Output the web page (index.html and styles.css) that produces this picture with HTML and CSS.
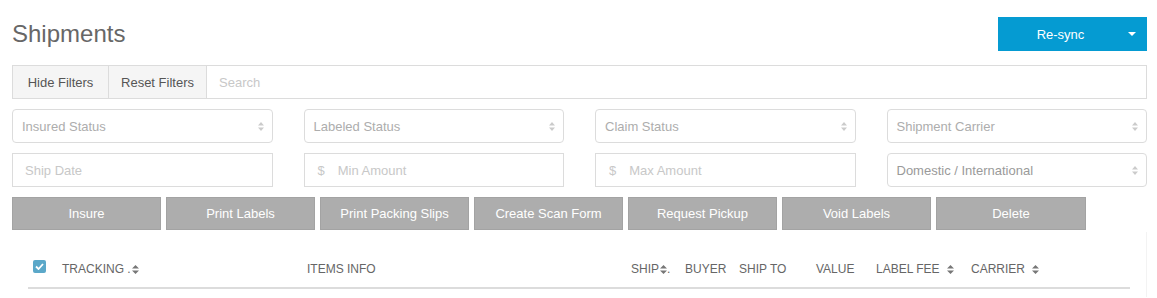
FILE: index.html
```html
<!DOCTYPE html>
<html>
<head>
<meta charset="utf-8">
<link rel="stylesheet" href="styles.css">
</head>
<body>
<div class="page">
  <div class="top">
    <h1 class="title">Shipments</h1>
    <div class="resync">
      <span class="resync-main">Re-sync</span>
      <span class="resync-caret"><svg width="8" height="4" viewBox="0 0 8 4"><path d="M0 0H8L4 4Z" fill="#fff"/></svg></span>
    </div>
  </div>

  <div class="filterbar">
    <button class="fbtn">Hide Filters</button>
    <button class="fbtn">Reset Filters</button>
    <input class="search" type="text" placeholder="Search">
  </div>

  <div class="filters">
    <div class="sel"><span>Insured Status</span><svg class="arr" width="6" height="9" viewBox="0 0 6 9"><path d="M0 3.5L3 0L6 3.5Z M0 5.5L3 9L6 5.5Z" fill="#cbcbcb"/></svg></div>
    <div class="sel"><span>Labeled Status</span><svg class="arr" width="6" height="9" viewBox="0 0 6 9"><path d="M0 3.5L3 0L6 3.5Z M0 5.5L3 9L6 5.5Z" fill="#cbcbcb"/></svg></div>
    <div class="sel"><span>Claim Status</span><svg class="arr" width="6" height="9" viewBox="0 0 6 9"><path d="M0 3.5L3 0L6 3.5Z M0 5.5L3 9L6 5.5Z" fill="#cbcbcb"/></svg></div>
    <div class="sel"><span>Shipment Carrier</span><svg class="arr" width="6" height="9" viewBox="0 0 6 9"><path d="M0 3.5L3 0L6 3.5Z M0 5.5L3 9L6 5.5Z" fill="#cbcbcb"/></svg></div>

    <div class="inp"><span class="ph">Ship Date</span></div>
    <div class="inp money"><span class="cur">$</span><span class="ph">Min Amount</span></div>
    <div class="inp money"><span class="cur">$</span><span class="ph">Max Amount</span></div>
    <div class="sel dark"><span>Domestic / International</span><svg class="arr" width="6" height="9" viewBox="0 0 6 9"><path d="M0 3.5L3 0L6 3.5Z M0 5.5L3 9L6 5.5Z" fill="#cbcbcb"/></svg></div>
  </div>

  <div class="actions">
    <button class="act">Insure</button>
    <button class="act">Print Labels</button>
    <button class="act">Print Packing Slips</button>
    <button class="act">Create Scan Form</button>
    <button class="act">Request Pickup</button>
    <button class="act">Void Labels</button>
    <button class="act">Delete</button>
  </div>

  <div class="panel">
    <div class="thead">
      <div class="th c-check"><span class="cb"><svg width="9" height="7" viewBox="0 0 9 7"><path d="M1 3.5L3.5 6L8 1" stroke="#fff" stroke-width="1.8" fill="none"/></svg></span></div>
      <div class="th c-track">TRACKING .<svg class="sort" width="7" height="9" viewBox="0 0 7 9"><path d="M0 3.6L3.5 0L7 3.6Z M0 5.4L3.5 9L7 5.4Z" fill="#777"/></svg></div>
      <div class="th c-items">ITEMS INFO</div>
      <div class="th c-ship">SHIP<svg class="sort" width="7" height="9" viewBox="0 0 7 9"><path d="M0 3.6L3.5 0L7 3.6Z M0 5.4L3.5 9L7 5.4Z" fill="#777"/></svg>.</div>
      <div class="th c-buyer">BUYER</div>
      <div class="th c-shipto">SHIP TO</div>
      <div class="th c-value">VALUE</div>
      <div class="th c-fee">LABEL FEE<svg class="sort wide" width="7" height="9" viewBox="0 0 7 9"><path d="M0 3.6L3.5 0L7 3.6Z M0 5.4L3.5 9L7 5.4Z" fill="#777"/></svg></div>
      <div class="th c-carrier">CARRIER<svg class="sort wide" width="7" height="9" viewBox="0 0 7 9"><path d="M0 3.6L3.5 0L7 3.6Z M0 5.4L3.5 9L7 5.4Z" fill="#777"/></svg></div>
    </div>
  </div>
</div>
</body>
</html>
```

FILE: styles.css
```css
* { box-sizing: border-box; }
html, body { margin: 0; padding: 0; background: #fff; }
body { font-family: "Liberation Sans", Arial, sans-serif; font-size: 13px; color: #555; }
.page { padding: 17px 10px 0 12px; }

.top { display: flex; justify-content: space-between; align-items: center; height: 34px; }
.title { margin: 0; font-size: 24px; font-weight: normal; color: #676767; line-height: 34px; }
.resync { width: 149px; height: 34px; background: #059bd2; color: #fff; display: flex; align-items: center; }
.resync-main { flex: 1; text-align: center; padding-left: 2px; }
.resync-caret { width: 26px; display: flex; justify-content: center; align-items: center; padding-right: 4px; }

.filterbar { margin-top: 14px; height: 34px; border: 1px solid #dcdcdc; display: flex; }
.fbtn { font: inherit; font-size: 13px; color: #555; background: #f5f5f5; border: 0; border-right: 1px solid #dcdcdc; padding: 0; height: 32px; }
.fbtn:nth-child(1) { width: 96px; }
.fbtn:nth-child(2) { width: 98px; }
.search { flex: 1; border: 0; font: inherit; font-size: 13px; padding: 0 12px; outline: none; }
.search::placeholder { color: #c8c8c8; }

.filters { margin-top: 10px; display: grid; grid-template-columns: repeat(4, 1fr); column-gap: 31px; row-gap: 10px; }
.sel, .inp { height: 34px; border: 1px solid #dcdcdc; display: flex; align-items: center; }
.sel { border-radius: 4px; padding: 0 8px 0 9px; justify-content: space-between; color: #adadad; }
.sel.dark { color: #9a9a9a; }
.inp { padding: 0 12px; color: #c8c8c8; }
.inp.money { padding-left: 13px; }
.cur { margin-right: 13px; }

.actions { margin-top: 10px; display: flex; gap: 5px; }
.act { width: 149px; height: 33px; background: #adadad; border: 1px solid #a3a3a3; color: #fff; font: inherit; font-size: 13px; padding: 0; }
.act:last-child { width: 150px; }

.panel { margin-top: 2px; padding: 24px 16px 8px 16px; border-right: 1px solid #f3f3f3; }
.thead { display: flex; border-bottom: 2px solid #dcdcdc; padding: 3px 0 8px; color: #666; font-size: 12px; line-height: 20px; }
.th { display: flex; align-items: center; white-space: nowrap; }
.sort { margin-left: 1px; }
.sort.wide { margin-left: 7px; }
.c-check { width: 29px; padding-left: 5px; }
.cb { width: 13px; height: 13px; border-radius: 2px; background: #5ba8c9; display: flex; align-items: center; justify-content: center; margin-top: -6px; }
.c-track { width: 245px; padding-left: 5px; }
.c-items { width: 324px; padding-left: 5px; }
.c-ship { width: 54px; padding-left: 5px; }
.c-buyer { width: 54px; padding-left: 5px; }
.c-shipto { width: 77px; padding-left: 5px; }
.c-value { width: 60px; padding-left: 5px; }
.c-fee { width: 95px; padding-left: 5px; }
.c-carrier { flex: 1; padding-left: 5px; }
```
